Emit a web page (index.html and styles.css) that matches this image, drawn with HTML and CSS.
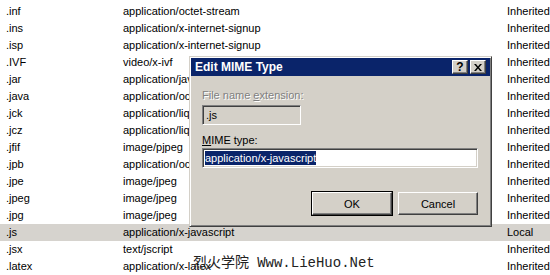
FILE: index.html
```html
<!DOCTYPE html>
<html lang="en">
<head>
  <meta charset="UTF-8">
  <title>MIME Types</title>
  <link rel="stylesheet" href="styles.css">
</head>
<body>
  <div class="list">
    <div class="row"><span>.iii</span><span>application/x-iphone</span><span>Inherited</span></div>
    <div class="row"><span>.inf</span><span>application/octet-stream</span><span>Inherited</span></div>
    <div class="row"><span>.ins</span><span>application/x-internet-signup</span><span>Inherited</span></div>
    <div class="row"><span>.isp</span><span>application/x-internet-signup</span><span>Inherited</span></div>
    <div class="row"><span>.IVF</span><span>video/x-ivf</span><span>Inherited</span></div>
    <div class="row"><span>.jar</span><span>application/java-archive</span><span>Inherited</span></div>
    <div class="row"><span>.java</span><span>application/octet-stream</span><span>Inherited</span></div>
    <div class="row"><span>.jck</span><span>application/liquidmotion</span><span>Inherited</span></div>
    <div class="row"><span>.jcz</span><span>application/liquidmotion</span><span>Inherited</span></div>
    <div class="row"><span>.jfif</span><span>image/pjpeg</span><span>Inherited</span></div>
    <div class="row"><span>.jpb</span><span>application/octet-stream</span><span>Inherited</span></div>
    <div class="row"><span>.jpe</span><span>image/jpeg</span><span>Inherited</span></div>
    <div class="row"><span>.jpeg</span><span>image/jpeg</span><span>Inherited</span></div>
    <div class="row"><span>.jpg</span><span>image/jpeg</span><span>Inherited</span></div>
    <div class="row selected"><span>.js</span><span>application/x-javascript</span><span>Local</span></div>
    <div class="row"><span>.jsx</span><span>text/jscript</span><span>Inherited</span></div>
    <div class="row"><span>.latex</span><span>application/x-latex</span><span>Inherited</span></div>
  </div>

  <!-- modal dialog sits over the list -->
  <div class="dialog">
    <div class="titlebar">
      <span class="title">Edit MIME Type</span>
      <span class="caption-btn help">?</span>
      <span class="caption-btn close">
        <svg width="8" height="7" viewBox="0 0 8 7"><path d="M0 0h2l2 2.5L6 0h2L5 3.5 8 7H6L4 4.5 2 7H0l3-3.5z" fill="#000"/></svg>
      </span>
    </div>
    <div class="content">
      <div class="label disabled">File name <u>e</u>xtension:</div>
      <div class="field field-ext">.js</div>
      <div class="label"><u>M</u>IME type:</div>
      <div class="field field-mime"><span class="sel">application/x-javascript</span></div>
      <div class="buttons">
        <button class="btn default">OK</button>
        <button class="btn">Cancel</button>
      </div>
    </div>
  </div>

  <div class="mark">烈火学院 <span class="mark-url">Www.LieHuo.Net</span></div>
</body>
</html>
```

FILE: styles.css
```css
body {
  margin: 0;
  background: #fff;
  font-family: "Liberation Sans", Arial, sans-serif;
  font-size: 11px;
  color: #000;
  width: 550px;
  height: 275px;
  overflow: hidden;
  position: relative;
}
/* list view rows */
.list {
  margin-top: -14px;
}
.row {
  display: grid;
  grid-template-columns: 117px 384px 1fr;
  padding-left: 6px;
  height: 17px;
  line-height: 17px;
  white-space: nowrap;
}
.row.selected {
  background: #d6d3ce;
}
/* Edit MIME Type dialog */
.dialog {
  position: absolute;
  left: 189px;
  top: 56px;
  width: 303px;
  height: 171px;
  box-sizing: border-box;
  background: #d4d0c8;
  border: 1px solid;
  border-color: #d4d0c8 #404040 #404040 #d4d0c8;
  box-shadow: inset 1px 1px #fff, inset -1px -1px #808080;
  padding: 1px;
  display: flex;
  flex-direction: column;
}
.titlebar {
  height: 18px;
  background: #0a246a;
  display: flex;
  align-items: center;
  padding: 0 4px 0 4px;
  gap: 2px;
}
.title {
  flex: 1;
  color: #fff;
  font-family: "Liberation Sans", Arial, sans-serif;
  font-weight: bold;
  font-size: 12px;
}
.caption-btn {
  width: 16px;
  height: 14px;
  box-sizing: border-box;
  background: #d4d0c8;
  border: 1px solid;
  border-color: #fff #404040 #404040 #fff;
  box-shadow: inset -1px -1px #808080;
  display: flex;
  align-items: center;
  justify-content: center;
}
.help {
  font-weight: bold;
  font-size: 12px;
  line-height: 1;
}
.content {
  flex: 1;
  padding: 12px 12px 0 11px;
  display: flex;
  flex-direction: column;
}
.label {
  height: 14px;
  line-height: 14px;
}
.label.disabled {
  color: #808080;
  text-shadow: 1px 1px #fff;
}
.field {
  height: 20px;
  box-sizing: border-box;
  border: 1px solid;
  border-color: #808080 #fff #fff #808080;
  box-shadow: inset 1px 1px #404040, inset -1px -1px #d4d0c8;
  line-height: 18px;
  padding-left: 3px;
  white-space: nowrap;
}
.field-ext {
  width: 99px;
  margin: 3px 0 8px;
  background: #d4d0c8;
}
.field-mime {
  margin-top: 1px;
  background: #fff;
  padding-left: 2px;
}
.sel {
  background: #0a246a;
  color: #fff;
  padding: 1px 0;
}
.buttons {
  display: flex;
  justify-content: flex-end;
  gap: 6px;
  margin-top: 24px;
}
.btn {
  width: 80px;
  height: 23px;
  box-sizing: border-box;
  background: #d4d0c8;
  border: 1px solid;
  border-color: #fff #404040 #404040 #fff;
  box-shadow: inset -1px -1px #808080, inset 1px 1px #d4d0c8;
  font-family: "Liberation Sans", Arial, sans-serif;
  font-size: 11px;
  color: #000;
  padding: 0;
}
.btn.default {
  outline: 1px solid #000;
  outline-offset: 0;
}
/* watermark printed over the screenshot */
.mark {
  position: absolute;
  left: 193px;
  top: 251px;
  font-family: "Noto Sans CJK SC", sans-serif;
  font-size: 14px;
  color: #222;
  white-space: nowrap;
}
.mark-url {
  font-family: "Liberation Mono", monospace;
  font-size: 14px;
  margin-left: 5px;
}
```
